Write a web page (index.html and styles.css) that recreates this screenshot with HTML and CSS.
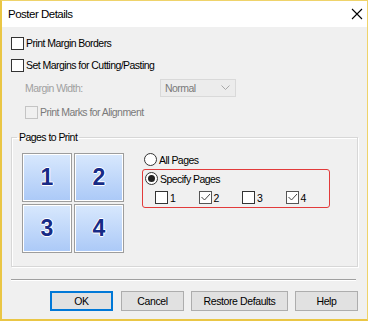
FILE: index.html
```html
<!DOCTYPE html>
<html lang="en">
<head>
    <meta charset="UTF-8">
    <title>Poster Details</title>
    <link rel="stylesheet" href="styles.css">
</head>
<body>
    <div class="dialog">
        <!-- Barra de titulo -->
        <div class="titlebar">
            <span class="title">Poster Details</span>
            <svg class="close" width="12" height="12" viewBox="0 0 12 12">
                <path d="M1 1 L11 11 M11 1 L1 11" stroke="#000" stroke-width="1.1" fill="none"/>
            </svg>
        </div>

        <div class="content">
            <div class="row">
                <span class="check"></span>
                <span>Print Margin Borders</span>
            </div>
            <div class="row">
                <span class="check"></span>
                <span>Set Margins for Cutting/Pasting</span>
            </div>
            <div class="row row-width">
                <span class="label-off">Margin Width:</span>
                <div class="select">
                    <span>Normal</span>
                    <svg width="9" height="6" viewBox="0 0 9 6">
                        <path d="M0.5 0.5 L4.5 4.5 L8.5 0.5" stroke="#a8a8a8" fill="none"/>
                    </svg>
                </div>
            </div>
            <div class="row row-marks">
                <span class="check off"></span>
                <span class="text-off">Print Marks for Alignment</span>
            </div>

            <fieldset class="group">
                <legend>Pages to Print</legend>
                <div class="group-body">
                    <div class="tiles">
                        <div class="tile">1</div>
                        <div class="tile">2</div>
                        <div class="tile">3</div>
                        <div class="tile">4</div>
                    </div>
                    <div class="options">
                        <div class="radio-row">
                            <span class="radio"></span>
                            <span>All Pages</span>
                        </div>
                        <div class="specify">
                            <div class="radio-row">
                                <span class="radio on"></span>
                                <span>Specify Pages</span>
                            </div>
                            <div class="pages">
                                <div class="page"><span class="check"></span>1</div>
                                <div class="page"><span class="check ticked"><svg width="11" height="11" viewBox="0 0 11 11"><path d="M1.5 5 L4.5 8 L10 2" stroke="#444" stroke-width="1" fill="none"/></svg></span>2</div>
                                <div class="page"><span class="check"></span>3</div>
                                <div class="page"><span class="check ticked"><svg width="11" height="11" viewBox="0 0 11 11"><path d="M1.5 5 L4.5 8 L10 2" stroke="#444" stroke-width="1" fill="none"/></svg></span>4</div>
                            </div>
                        </div>
                    </div>
                </div>
            </fieldset>

            <div class="separator"></div>

            <div class="buttons">
                <button class="btn btn-ok">OK</button>
                <button class="btn">Cancel</button>
                <button class="btn btn-wide">Restore Defaults</button>
                <button class="btn">Help</button>
            </div>
        </div>
    </div>
</body>
</html>
```

FILE: styles.css
```css
/* Estilo general */
body {
    margin: 0;
    font-family: 'Liberation Sans', Arial, sans-serif;
    font-size: 10.5px;
    letter-spacing: -0.55px;
    color: #000;
}

/* Ventana del dialogo */
.dialog {
    width: 368px;
    height: 321px;
    box-sizing: border-box;
    border: 1px solid #efd36a;
    border-left: 2px solid #eac645;
    border-bottom: 2px solid #eac645;
    background-color: #f0f0f0;
    display: flex;
    flex-direction: column;
}

.titlebar {
    height: 26px;
    background-color: #fff;
    display: flex;
    align-items: center;
    justify-content: space-between;
    padding: 0 4px 0 6px;
}

.title {
    font-size: 11.5px;
    letter-spacing: -0.5px;
}

.content {
    padding: 5px 9px 0 9px;
    display: flex;
    flex-direction: column;
}

/* Filas de opciones */
.row {
    height: 22px;
    display: flex;
    align-items: center;
    gap: 2px;
}

.row-width {
    margin-top: 1px;
    padding-left: 14px;
    gap: 0;
}

.row-marks {
    margin-top: 2px;
    padding-left: 14px;
}

.check {
    width: 11px;
    height: 11px;
    border: 1px solid #333;
    background-color: #fff;
    display: inline-flex;
    flex-shrink: 0;
}

.check.off {
    border-color: #c4c4c4;
    background-color: #f0f0f0;
}

.check.ticked {
    border-color: #555;
}

.label-off {
    color: #a0a0a0;
    width: 135px;
}

.text-off {
    color: #7a7a7a;
}

.select {
    width: 65px;
    height: 16px;
    border: 1px solid #d9d9d9;
    background-color: #ececec;
    color: #7a7a7a;
    display: flex;
    align-items: center;
    justify-content: space-between;
    padding: 0 5px 0 4px;
}

/* Grupo de paginas */
.group {
    margin: 8px 0 0 0;
    padding: 9px 10px 13px 10px;
    border: 1px solid #d7d7d7;
    box-shadow: inset 1px 1px 0 #fff, 1px 1px 0 #fff;
}

.group legend {
    padding: 0 2px;
    margin-left: -5px;
    line-height: 13px;
}

.group-body {
    display: flex;
}

.tiles {
    display: grid;
    grid-template-columns: 50px 50px;
    grid-template-rows: 49px 49px;
    gap: 2px;
}

.tile {
    border: 1px solid #9d9d9d;
    box-shadow: inset 0 0 0 1px #fff;
    background: linear-gradient(#d8e8fd, #abc9f7);
    color: #172b86;
    font-family: 'Liberation Sans', Arial, sans-serif;
    font-weight: bold;
    font-size: 23px;
    letter-spacing: 0;
    display: flex;
    align-items: center;
    justify-content: center;
    text-shadow: 1px 0 0 #fff, -1px 0 0 #fff, 0 1px 0 #fff, 0 -1px 0 #fff;
}

.options {
    margin-left: 18px;
    width: 188px;
}

.radio-row {
    height: 13px;
    display: flex;
    align-items: center;
    gap: 2px;
    margin-left: 2px;
}

.radio-row + .specify {
    margin-top: 3px;
}

.radio {
    width: 11px;
    height: 11px;
    border: 1px solid #333;
    border-radius: 50%;
    background-color: #fff;
    display: inline-flex;
    align-items: center;
    justify-content: center;
}

.radio.on::after {
    content: '';
    width: 7px;
    height: 7px;
    border-radius: 50%;
    background-color: #222;
}

.specify {
    border: 1px solid #e23b3b;
    border-radius: 3px;
    padding: 2px 0 4px 0;
    height: 31px;
}

.pages {
    display: flex;
    margin-top: 6px;
    padding-left: 12px;
}

.page {
    width: 50px;
    display: flex;
    align-items: center;
    gap: 2px;
}

.separator {
    margin-top: 12px;
    height: 1px;
    background-color: #a0a0a0;
    border-bottom: 1px solid #fff;
    margin-right: 2px;
}

/* Botones */
.buttons {
    margin-top: 10px;
    display: flex;
    justify-content: flex-end;
    gap: 7px;
}

.btn {
    width: 63px;
    height: 20px;
    font-family: 'Liberation Sans', Arial, sans-serif;
    font-size: 10.5px;
    letter-spacing: -0.4px;
    color: #000;
    background-color: #e1e1e1;
    border: 1px solid #adadad;
    padding: 0;
}

.btn-ok {
    border: 2px solid #0078d7;
    margin-right: 1px;
}

.btn-wide {
    width: 97px;
}
```
